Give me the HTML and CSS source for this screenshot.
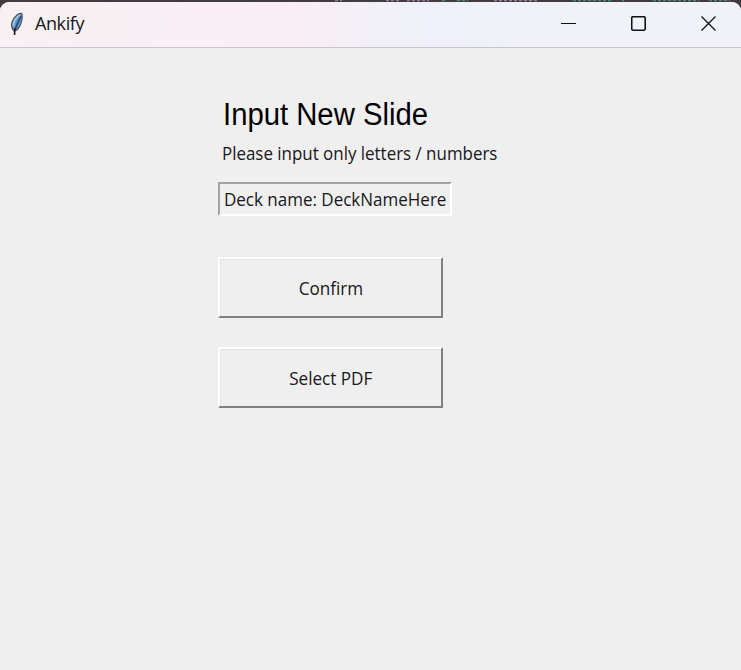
FILE: index.html
```html
<!DOCTYPE html>
<html lang="en">
<head>
<meta charset="utf-8">
<title>Ankify</title>
<link rel="stylesheet" href="styles.css">
</head>
<body>
<div class="backdrop" aria-hidden="true">
  <svg width="741" height="2" viewBox="0 0 741 2"><g stroke="#957b9c" stroke-width="1.5"><path d="M335 .5h7M386 .5h14M407 .5h22M494 .5h43" stroke-dasharray="3 2"/><path d="M442 .5h4M457 .5h11M573 .5h40M622 .5h2M653 .5h46M709 .5h21" stroke="#568478" stroke-dasharray="3 2"/></g></svg>
</div>
<div class="window">
  <header class="titlebar">
    <svg class="feather" width="16" height="26" viewBox="0 0 16 26">
      <path d="M4 19C1 14 3 8 8 4c3-2 5-2 5-1 1 5-1 12-5 16l-3 1z" fill="#6697c4" stroke="#4a525e" stroke-width="1.2"/>
      <path d="M4.5 15C4 11 7 6 11 4" fill="none" stroke="#a9c9e4" stroke-width="1.6"/>
      <path d="M12 5C10 9 8 13 6.500 18" fill="none" stroke="#284f82" stroke-width="1.8"/>
      <path d="M6 17l-.5 7" stroke="#171a20" stroke-width="1.6"/>
    </svg>
    <span class="title">Ankify</span>
    <div class="controls">
      <svg width="16" height="16" viewBox="0 0 16 16"><path class="line" d="M0 7.500h15"/></svg>
      <svg width="16" height="16" viewBox="0 0 16 16"><rect x=".7" y=".7" width="13.500" height="13.500" rx="1.500" class="box"/></svg>
      <svg width="16" height="16" viewBox="0 0 16 16"><path d="M.5.500l14 14M14.500.500l-14 14"/></svg>
    </div>
  </header>
  <main class="content">
    <h1 class="heading"><span>Input New Slide</span></h1>
    <p class="hint"><span>Please input only letters / numbers</span></p>
    <div class="deck"><span>Deck name: DeckNameHere</span></div>
    <button class="button confirm"><span>Confirm</span></button>
    <button class="button select"><span>Select PDF</span></button>
  </main>
</div>
</body>
</html>
```
FILE: styles.css
```css
* { box-sizing: border-box; }
body {
  margin: 0;
  height: 670px;
  overflow: hidden;
  background: #403c40;
  color: #18181c;
  font: 18px/24px "Open Sans", sans-serif;
}
.backdrop { height: 2px; }
.backdrop svg { display: block; }
.window {
  height: 668px;
  overflow: hidden;
  border-radius: 9px 9px 0 0;
  background: #efefef;
}
.titlebar {
  display: flex;
  align-items: center;
  height: 46px;
  padding: 0 24px 0 9px;
  border-bottom: 1px solid #c8c5ce;
  background: linear-gradient(90deg, #f8f0f3 0, #f9eef4 300px, #f3f0f6 350px, #eff0fa 440px, #f0f2f8 520px, #f0f2f8 100%);
}
.feather { margin-top: -2px; }
.title {
  margin-left: 10px;
  margin-top: -3px;
  letter-spacing: -0.4px;
}
.controls {
  display: flex;
  gap: 54px;
  margin-left: auto;
  margin-top: -1px;
}
.controls svg { display: block; fill: none; stroke: #111; stroke-width: 1.3; }
.controls .line { stroke-width: 1; }
.controls .box { stroke-width: 1.6; }
.content {
  display: flex;
  flex-direction: column;
  align-items: flex-start;
  padding: 48px 0 0 218px;
}
span { display: inline-block; white-space: nowrap; transform-origin: left center; }
.heading {
  margin: 0 0 0 5px;
  color: #000;
  font: 400 31px/38px "Liberation Sans", sans-serif;
}
.heading span { transform: scaleX(0.944); }
.hint { margin: 7px 0 0 4px; height: 24px; }
.hint span { transform: scaleX(0.94); }
.deck {
  width: 234px;
  height: 34px;
  margin-top: 17px;
  padding: 3px 0 0 4px;
  border: 2px solid;
  border-color: #a3a3a3 #fff #fff #a3a3a3;
}
.deck span { transform: scaleX(0.944); }
.button {
  width: 225px;
  height: 61px;
  padding: 0;
  border: 2px solid;
  border-color: #fff #808080 #808080 #fff;
  box-shadow: inset 1px 1px #e2e2e2;
  background: #efefef;
  color: inherit;
  font: inherit;
}
.button span { transform: scaleX(0.95); transform-origin: center; }
.confirm { margin-top: 41px; }
.select { margin-top: 29px; }
```
